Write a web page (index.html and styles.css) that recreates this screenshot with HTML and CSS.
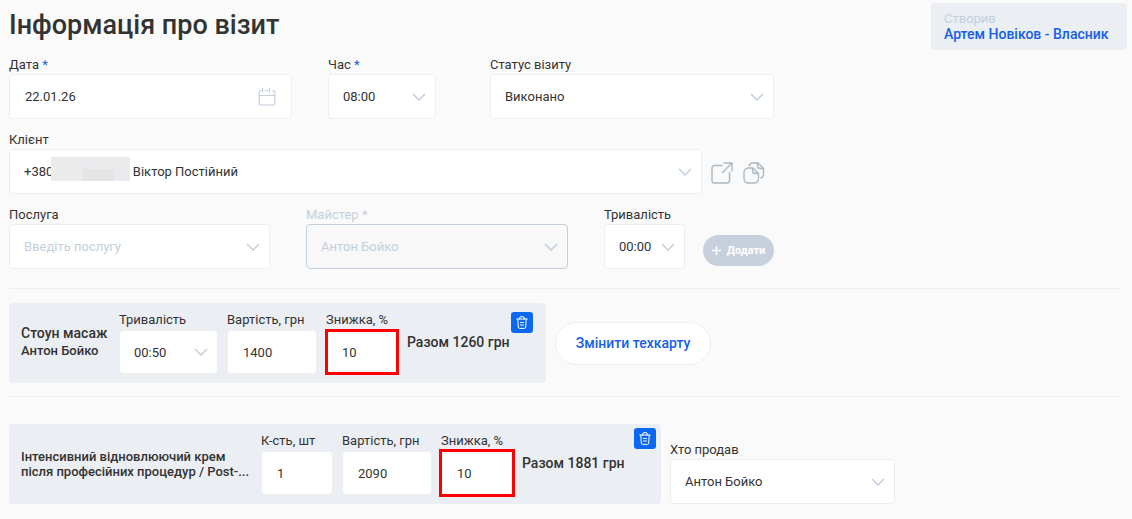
FILE: index.html
```html
<!DOCTYPE html>
<html lang="uk">
<head>
    <meta charset="UTF-8">
    <meta name="viewport" content="width=device-width, initial-scale=1.0">
    <title>Інформація про візит</title>
    <link rel="stylesheet" href="styles.css">
</head>
<body>
    <header class="header">
        <h1>Інформація про візит</h1>
        <div class="creator">
            <span>Створив</span>
            <a href="#">Артем Новіков - Власник</a>
        </div>
    </header>

    <form class="visit">
        <div class="row">
            <div class="field date">
                <label for="date">Дата <i>*</i></label>
                <div class="date-box">
                    <input type="text" id="date" value="22.01.26">
                    <svg width="18" height="18" viewBox="0 0 18 18" fill="none" stroke="#c3cfdd" stroke-width="1.200">
                        <path d="M3.500 2.500H3a1.800 1.800 0 0 0-1.800 1.800v10.900A1.800 1.800 0 0 0 3 17h12a1.800 1.800 0 0 0 1.800-1.800V4.300A1.800 1.800 0 0 0 15 2.500h-.5M6.500 2.500h4M1.200 7.500h15.600M4.500 0v4.500M11.500 0v4.500"/>
                    </svg>
                </div>
            </div>
            <div class="field time">
                <label for="time">Час <i>*</i></label>
                <select id="time"><option>08:00</option></select>
            </div>
            <div class="field status">
                <label for="status">Статус візиту</label>
                <select id="status"><option>Виконано</option></select>
            </div>
        </div>

        <div class="row client-row">
            <div class="field client">
                <label for="client">Клієнт</label>
                <select id="client"><option>+380&emsp;&emsp;&emsp;&emsp;&emsp;&emsp;Віктор Постійний</option></select>
                <div class="mosaic">
                    <b></b><b></b><b></b><b></b><b></b>
                    <b></b><b></b><b></b><b></b><b></b>
                </div>
            </div>
            <button type="button" class="icon-btn" aria-label="Відкрити">
                <svg width="22" height="22" viewBox="0 0 22 22" fill="none" stroke="#a9b8c6" stroke-width="1.400">
                    <path d="M11.500 3.500H3.200A2.200 2.200 0 0 0 1 5.700v13.100A2.200 2.200 0 0 0 3.200 21h13.100a2.200 2.200 0 0 0 2.200-2.200V10M12.500 1H21v8.500M21 1L11 11"/>
                </svg>
            </button>
            <button type="button" class="icon-btn" aria-label="Копіювати">
                <svg width="22" height="22" viewBox="0 0 22 22" fill="none" stroke="#a9b8c6" stroke-width="1.400">
                    <path d="M10 6H5.500A4.500 4.500 0 0 0 1 10.500v6A4.500 4.500 0 0 0 5.500 21h5.500a4.500 4.500 0 0 0 4.500-4.500v-5L10 6zM9.500 6v2.500a3 3 0 0 0 3 3h3"/>
                    <path d="M6 4a4 4 0 0 1 4-3h5l5.500 5.500v6a4 4 0 0 1-3 3.700M14.500 1v2.500a3 3 0 0 0 3 3h3"/>
                </svg>
            </button>
        </div>

        <div class="row">
            <div class="field service">
                <label for="service">Послуга</label>
                <select id="service" class="empty"><option>Введіть послугу</option></select>
            </div>
            <div class="field master">
                <label for="master">Майстер *</label>
                <select id="master" disabled><option>Антон Бойко</option></select>
            </div>
            <div class="field duration">
                <label for="duration">Тривалість</label>
                <select id="duration"><option>00:00</option></select>
            </div>
            <button type="button" class="add-btn">
                <svg width="9" height="9" viewBox="0 0 9 9" stroke="#fff" stroke-width="1.500"><path d="M4.500 0v9M0 4.500h9"/></svg>
                Додати
            </button>
        </div>
    </form>

    <section class="section">
        <div class="card">
            <div class="name">
                <strong>Стоун масаж</strong>
                <span>Антон Бойко</span>
            </div>
            <div class="field card-duration">
                <label for="duration1">Тривалість</label>
                <select id="duration1"><option>00:50</option></select>
            </div>
            <div class="field price">
                <label for="price1">Вартість, грн</label>
                <input type="text" id="price1" value="1400">
            </div>
            <div class="field discount">
                <label for="discount1">Знижка, %</label>
                <input type="text" id="discount1" value="10">
            </div>
            <div class="total">Разом 1260 грн</div>
            <button type="button" class="delete-btn" aria-label="Видалити">
                <svg width="12" height="13" viewBox="0 0 12 13" fill="none" stroke="#fff" stroke-linecap="round">
                    <path d="M.8 3h10.400M3.700 3V2a1.300 1.300 0 0 1 1.300-1.300h2A1.300 1.300 0 0 1 8.300 2v1M1.800 3.200l.5 7.800a1.400 1.400 0 0 0 1.400 1.400h4.600A1.400 1.400 0 0 0 9.700 11l.5-7.800M4.500 6.500h3M4.500 9h3"/>
                </svg>
            </button>
        </div>
        <button type="button" class="tech-btn">Змінити техкарту</button>
    </section>

    <section class="section goods">
        <div class="card goods-card">
            <div class="name">Інтенсивний відновлюючий крем після професійних процедур / Post-...</div>
            <div class="field count">
                <label for="count">К-сть, шт</label>
                <input type="text" id="count" value="1">
            </div>
            <div class="field price">
                <label for="price2">Вартість, грн</label>
                <input type="text" id="price2" value="2090">
            </div>
            <div class="field discount">
                <label for="discount2">Знижка, %</label>
                <input type="text" id="discount2" value="10">
            </div>
            <div class="total">Разом 1881 грн</div>
            <button type="button" class="delete-btn" aria-label="Видалити">
                <svg width="12" height="13" viewBox="0 0 12 13" fill="none" stroke="#fff" stroke-linecap="round">
                    <path d="M.8 3h10.400M3.700 3V2a1.300 1.300 0 0 1 1.300-1.300h2A1.300 1.300 0 0 1 8.300 2v1M1.800 3.200l.5 7.800a1.400 1.400 0 0 0 1.400 1.400h4.600A1.400 1.400 0 0 0 9.700 11l.5-7.800M4.500 6.500h3M4.500 9h3"/>
                </svg>
            </button>
        </div>
        <div class="field seller">
            <label for="seller">Хто продав</label>
            <select id="seller"><option>Антон Бойко</option></select>
        </div>
    </section>
</body>
</html>
```
FILE: styles.css
```css
* {
    box-sizing: border-box;
}

body {
    margin: 0;
    padding: 3px 11px 15px 9px;
    background: #fafafa;
    color: #333;
    font-family: Roboto, sans-serif;
    font-size: 13px;
}

button, input, select {
    font-family: inherit;
    font-size: 13px;
    color: inherit;
}

button {
    cursor: pointer;
}

.header {
    display: flex;
    justify-content: space-between;
    align-items: flex-start;
    margin-right: -6px;
}

h1 {
    margin: 0;
    font-size: 27px;
    line-height: 44px;
    font-weight: 500;
}

.creator {
    display: flex;
    flex-direction: column;
    min-width: 196px;
    height: 47px;
    padding: 8px 13px 0;
    border-radius: 4px;
    background: #ebeef3;
    line-height: 15px;
    color: #c3cfdd;
}

.creator a {
    font-size: 14px;
    line-height: 16px;
    font-weight: 500;
    color: #1460ea;
    text-decoration: none;
}

.visit {
    display: flex;
    flex-direction: column;
    gap: 13px;
    padding: 7px 0 19px;
    border-bottom: 1px solid #eee;
}

.row {
    display: flex;
    align-items: flex-end;
}

.field {
    display: flex;
    flex-direction: column;
    flex-shrink: 0;
}

.field label {
    padding-bottom: 2px;
    line-height: 15px;
    white-space: nowrap;
}

.field i {
    font-style: normal;
    color: #1460ea;
}

.field input, .field select {
    width: 100%;
    height: 45px;
    padding: 0 15px;
    border: 1px solid #eee;
    border-radius: 4px;
    background: #fff;
    outline: none;
}

.field select {
    appearance: none;
    padding: 0 14px;
    background: #fff url("data:image/svg+xml,%3Csvg xmlns='http://www.w3.org/2000/svg' width='14' height='8' fill='none' stroke='%23c3cfdd' stroke-width='1.500'%3E%3Cpath d='M1 1l6 6 6-6'/%3E%3C/svg%3E") no-repeat right 9px center;
}

.date {
    width: 283px;
    margin-right: 36px;
}

.date-box {
    position: relative;
}

.date-box svg {
    position: absolute;
    top: 14px;
    right: 16px;
}

.time {
    width: 108px;
    margin-right: 54px;
}

.status {
    width: 284px;
}

.client {
    position: relative;
    width: 693px;
    margin-right: 9px;
}

/* hides the phone number */
.mosaic {
    position: absolute;
    left: 42px;
    top: 25px;
    display: grid;
    grid-template-columns: repeat(5, 1fr);
    width: 79px;
    height: 24px;
}

.mosaic b {
    background: #ebebec;
}

.mosaic b:nth-child(3), .mosaic b:nth-child(10) {
    background: #e8eaed;
}

.mosaic b:nth-child(8), .mosaic b:nth-child(9) {
    background: #e4e4e4;
}

.icon-btn {
    width: 22px;
    height: 22px;
    margin: 0 10px 10px 0;
    padding: 0;
    border: none;
    background: none;
}

.service {
    width: 261px;
    margin-right: 36px;
}

.service .empty {
    color: #c3cfdd;
}

.master {
    width: 262px;
    margin-right: 36px;
    color: #c3cfdd;
}

.field select:disabled {
    border-color: #c3cfdd;
    background-color: #f8f8f8;
    opacity: 1;
}

.duration {
    width: 81px;
    margin-right: 18px;
}

.add-btn {
    display: flex;
    align-items: center;
    justify-content: center;
    gap: 6px;
    width: 71px;
    height: 31px;
    margin-bottom: 3px;
    padding: 0;
    border: none;
    border-radius: 16px;
    background: #c8d0de;
    color: #fff;
    font-size: 11px;
    font-weight: 700;
}

.section {
    display: flex;
    align-items: center;
    padding: 14px 0 13px;
    border-bottom: 1px solid #eee;
}

.card {
    position: relative;
    display: flex;
    align-items: flex-start;
    width: 537px;
    height: 80px;
    flex-shrink: 0;
    padding: 8px 0 0 12px;
    border-radius: 4px;
    background: #ebeef3;
}

.card .field {
    margin-right: 9px;
}

.card .field label {
    padding: 1px 0 3px;
}

.card input, .card select {
    height: 44px;
}

.name {
    display: flex;
    flex-direction: column;
    width: 98px;
    padding-top: 12px;
    flex-shrink: 0;
    font-weight: 500;
    line-height: 16px;
}

.name strong {
    font-size: 14px;
    line-height: 20px;
    font-weight: 500;
    white-space: nowrap;
}

.card-duration {
    width: 99px;
}

.price {
    width: 90px;
}

.discount {
    width: 72px;
}

.discount input {
    border-radius: 0;
    outline: 3px solid #f00;
    outline-offset: -2px;
}

.total {
    padding-top: 21px;
    font-size: 14px;
    line-height: 20px;
    font-weight: 500;
    white-space: nowrap;
}

.delete-btn {
    position: absolute;
    top: 9px;
    right: 13px;
    display: flex;
    align-items: center;
    justify-content: center;
    width: 22px;
    height: 21px;
    padding: 0;
    border: none;
    border-radius: 3px;
    background: #0d68f1;
}

.tech-btn {
    width: 156px;
    height: 43px;
    margin-left: 9px;
    padding: 0;
    border: 1px solid #eee;
    border-radius: 22px;
    background: #fff;
    color: #1460ea;
    font-size: 14px;
    font-weight: 500;
}

.goods {
    align-items: flex-end;
    padding: 27px 0 0;
    border-bottom: none;
}

.goods-card {
    width: 652px;
}

.goods-card .name {
    width: 240px;
    padding: 17px 8px 0 0;
    line-height: 15px;
}

.goods-card .discount input {
    outline-offset: -1px;
}

.goods-card .delete-btn {
    top: 4px;
    right: 5px;
}

.count {
    width: 72px;
}

.seller {
    width: 225px;
    margin-left: 9px;
}
```
